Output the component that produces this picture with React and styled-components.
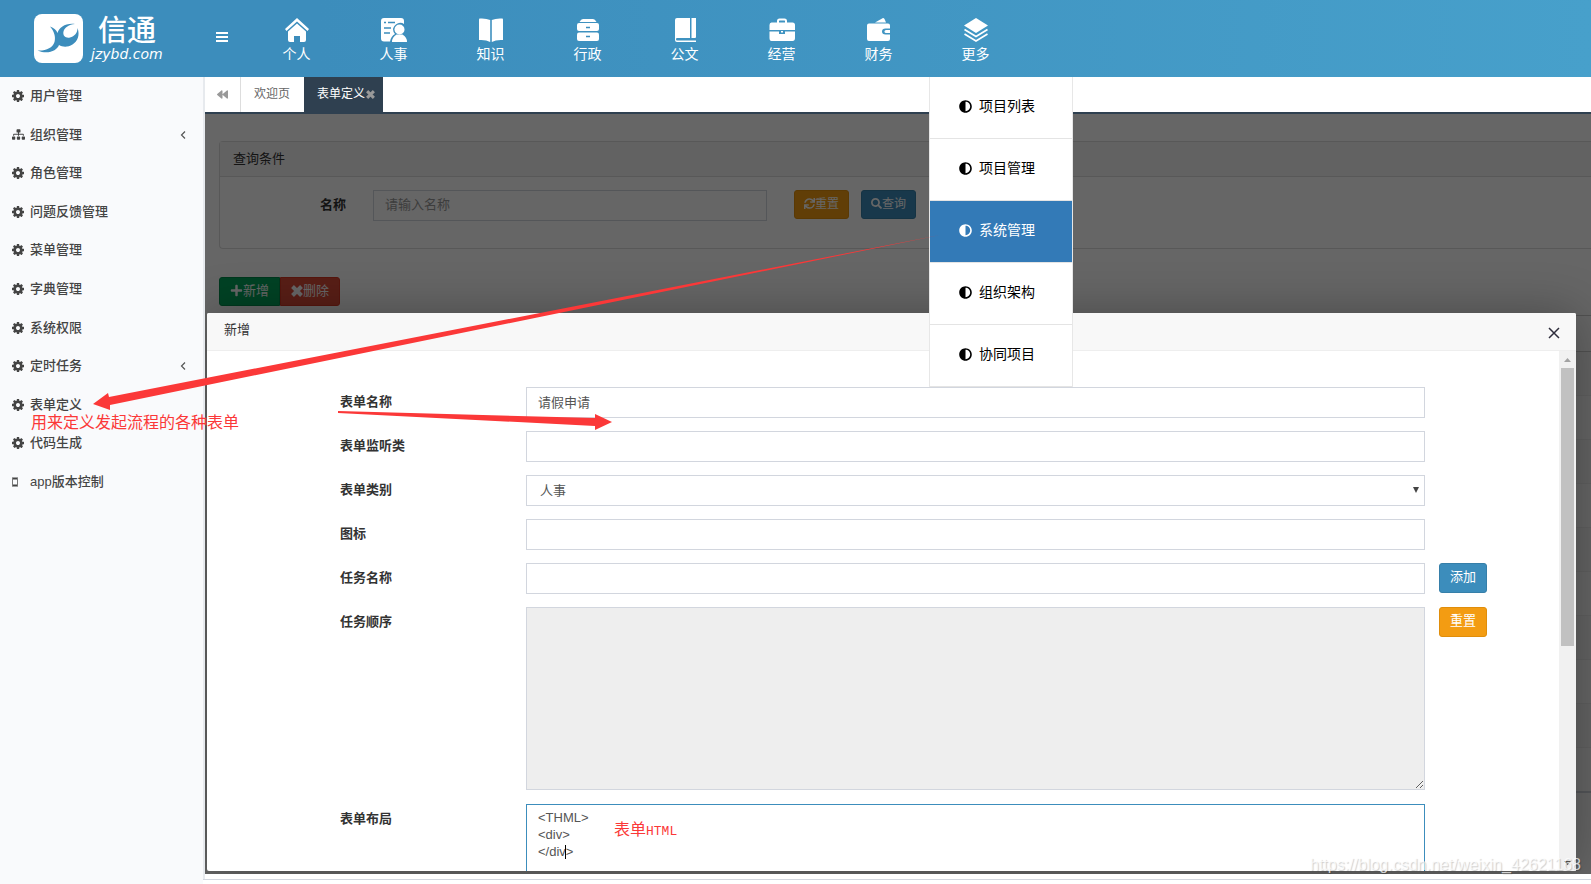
import React from "react";
import styled, { createGlobalStyle, css } from "styled-components";
import {
  FaAdjust,
  FaBackward,
  FaPlus,
  FaSearch,
  FaSitemap,
  FaSync,
} from "react-icons/fa";

const GlobalStyle = createGlobalStyle`
  *, *::before, *::after { box-sizing: border-box; }
  body {
    margin: 0;
    background: #fff;
    color: #333;
    font: 13px/18px "Liberation Sans", "Noto Sans CJK SC", sans-serif;
  }
  button, input, select, textarea { font: inherit; margin: 0; }
  svg { display: block; flex: none; }
`;

const Page = styled.div`
  position: relative;
  display: flex;
  flex-direction: column;
  height: 100vh;
  overflow: hidden;
`;

/* ---------- top bar ---------- */

const Header = styled.header`
  position: relative;
  z-index: 5;
  display: flex;
  flex: none;
  height: 77px;
  background: linear-gradient(90deg, #3c8dbc 20%, #47a0cb 100%);
  color: #fff;
`;

const Brand = styled.a`
  display: flex;
  align-items: center;
  gap: 8px;
  width: 204px;
  padding-left: 34px;
  color: #fff;
  text-decoration: none;
`;

const BrandText = styled.span`
  display: flex;
  flex-direction: column;
`;

const BrandName = styled.span`
  padding-left: 7px;
  font-size: 29px;
  line-height: 30px;
  font-weight: 500;
`;

const BrandSite = styled.span`
  font: italic 14px/16px "DejaVu Sans", sans-serif;
`;

const IconButton = styled.button`
  display: flex;
  align-items: center;
  justify-content: center;
  padding: 0 0 ${(p) => p.$lift || 0}px;
  border: 0;
  background: none;
  color: ${(p) => p.$color || "inherit"};
  width: ${(p) => p.$width || 35}px;
`;

const TopNav = styled.nav`
  display: flex;
  padding-left: 9px;
`;

const NavItem = styled.div`
  position: relative;
  width: 97px;
`;

const NavLink = styled.a`
  display: flex;
  flex-direction: column;
  align-items: center;
  gap: 2px;
  padding-top: 18px;
  color: #fff;
  font-size: 14px;
  line-height: 20px;
  text-decoration: none;
`;

const Menu = styled.div`
  position: absolute;
  top: 77px;
  left: 2px;
  width: 144px;
  border: 1px solid #e7e7e7;
  border-width: 0 1px;
  background: #fff;
`;

const MenuLink = styled.a`
  display: flex;
  align-items: center;
  gap: 7px;
  height: 62px;
  padding: 0 0 3px 29px;
  border-bottom: 1px solid #e4e4e4;
  background: ${(p) => (p.$active ? "#337ab7" : "#fff")};
  color: ${(p) => (p.$active ? "#fff" : "#000")};
  font-size: 14px;
  text-decoration: none;
`;

/* ---------- side bar ---------- */

const Body = styled.div`
  display: flex;
  flex: 1;
  min-height: 0;
`;

const Sidebar = styled.nav`
  flex: none;
  width: 203px;
  background: #f9fafc;
`;

const SideList = styled.ul`
  display: grid;
  grid-template-rows: repeat(11, 1fr);
  height: 424px;
  margin: 0;
  padding: 0;
  list-style: none;
`;

const SideLink = styled.a`
  display: flex;
  align-items: center;
  height: 100%;
  padding: 0 17px 0 12px;
  color: #444;
  font-weight: 500;
  text-decoration: none;
`;

const SideIcon = styled.span`
  display: flex;
  width: 18px;
`;

const SideText = styled.span`
  flex: 1;
`;

/* ---------- work area ---------- */

const Main = styled.main`
  display: flex;
  flex: 1;
  flex-direction: column;
  min-width: 0;
`;

const Work = styled.div`
  display: flex;
  flex: 1;
  flex-direction: column;
  min-height: 0;
  padding-bottom: 5px;
  border-left: 2px solid #e7eaee;
`;

const Footer = styled.footer`
  flex: none;
  height: 5px;
  border-top: 1px solid #d2d6de;
`;

const Tabs = styled.div`
  display: flex;
  flex: none;
  height: 37px;
  border-bottom: 2px solid #2f4050;
  font-size: 12px;
`;

const TabScroll = styled(IconButton)`
  width: 36px;
  border-right: 1px solid #ddd;
`;

const Tab = styled.a`
  display: flex;
  align-items: center;
  gap: 1px;
  padding: 0 ${(p) => (p.$active ? 8 : 14)}px 1px 13px;
  background: ${(p) => (p.$active ? "#2f4050" : "#fff")};
  color: ${(p) => (p.$active ? "#fff" : "#666")};
  text-decoration: none;
`;

const Stage = styled.section`
  position: relative;
  flex: 1;
  min-height: 0;
  overflow: hidden;
  padding: 27px 0 0 14px;
`;

const Panel = styled.div`
  margin-bottom: 28px;
  border: 1px solid #ddd;
  border-right: 0;
  border-radius: 4px 0 0 4px;
`;

const PanelTitle = styled.div`
  height: 35px;
  padding: 8px 13px;
  border-bottom: 1px solid #ddd;
  background: #f5f5f5;
`;

const SearchForm = styled.form`
  display: flex;
  gap: 27px;
  height: 71px;
  padding-top: 13px;
`;

const Label = styled.label`
  padding-top: 6px;
  color: #333;
  font-weight: 700;
  ${(p) =>
    p.$right &&
    css`
      width: 126px;
      text-align: right;
    `}
`;

const control = css`
  width: 100%;
  padding: 6px 11px;
  border: 1px solid #d2d6de;
  border-radius: 0;
  background: #fff;
  color: #555;
  outline: 0;
`;

const Input = styled.input`
  ${control}
  height: 31px;
  padding-top: 5px;
  padding-bottom: 7px;
  &::placeholder { color: #999; opacity: 1; }
`;

const SearchInput = styled(Input)`
  width: 394px;
`;

const ButtonRow = styled.div`
  display: flex;
  align-items: flex-start;
  gap: ${(p) => p.$gap || 0}px;
`;

const tones = {
  primary: ["#3c8dbc", "#367fa9"],
  warning: ["#f39c12", "#e08e0b"],
  success: ["#00a65a", "#008d4c"],
  danger: ["#dd4b39", "#d73925"],
};

const Button = styled.button`
  display: flex;
  align-items: center;
  height: ${(p) => (p.$small ? 29 : 30)}px;
  padding: 0 ${(p) => p.$pad || 10}px 2px;
  border: 1px solid ${(p) => tones[p.$tone][1]};
  border-radius: ${(p) => p.$radius || "3px"};
  background: ${(p) => tones[p.$tone][0]};
  color: #fff;
  font-size: ${(p) => (p.$size || 13)}px;
`;

const Grid = styled.table`
  width: 100%;
  margin-top: 9px;
  border-collapse: collapse;
  border-top: 1px solid #ccc;
  border-bottom: 2px solid #d2d6de;
  th { height: 36px; padding: 0; border-bottom: 1px solid #ccc; }
  td { height: 44px; padding: 0; border-bottom: 1px solid #f0f0f0; }
  tbody tr:nth-child(odd) { background: #f9f9f9; }
`;

const Shade = styled.div`
  position: absolute;
  inset: 0;
  background: rgba(0, 0, 0, 0.6);
`;

/* ---------- dialog ---------- */

const Dialog = styled.div`
  position: absolute;
  inset: 199px 15px 3px 2px;
  display: flex;
  flex-direction: column;
  border-radius: 2px;
  background: #fff;
  box-shadow: 1px 1px 50px rgba(0, 0, 0, 0.3);
`;

const DialogHead = styled.div`
  display: flex;
  flex: none;
  align-items: center;
  justify-content: space-between;
  height: 38px;
  padding: 0 15px 3px 17px;
  border-bottom: 1px solid #eee;
  border-radius: 2px 2px 0 0;
  background: #f8f8f8;
`;

const CloseButton = styled(IconButton)`
  width: 14px;
  padding-top: 5px;
`;

const DialogBody = styled.div`
  display: flex;
  flex: 1;
  min-height: 0;
`;

const Form = styled.form`
  display: grid;
  flex: 1;
  grid-template-columns: 172px 1fr 120px;
  align-content: start;
  align-items: start;
  gap: 13px 14px;
  min-width: 0;
  overflow: hidden;
  padding: 36px 0 0 133px;
`;

const Field = styled.div`
  position: relative;
  display: flex;
`;

const Select = styled.select`
  ${control}
  height: 31px;
  padding: 0 13px;
  appearance: none;
`;

const SelectArrow = styled.svg`
  position: absolute;
  top: 12px;
  right: 6px;
  pointer-events: none;
`;

const TextArea = styled.textarea`
  ${control}
  height: ${(p) => p.$height}px;
  padding: 4px 11px;
  line-height: 17px;
  ${(p) =>
    p.$disabled &&
    css`
      background: #eee;
      margin-bottom: 1px;
    `}
  ${(p) =>
    p.$focused &&
    css`
      border-color: #3c8dbc;
    `}
`;

const Caret = styled.span`
  position: absolute;
  top: 41px;
  left: 39px;
  width: 1px;
  height: 14px;
  background: #000;
`;

const ScrollTrack = styled.div`
  display: flex;
  flex: none;
  flex-direction: column;
  align-items: center;
  justify-content: space-between;
  width: 17px;
  padding: 7px 0 6px;
  background: #f1f1f1;
`;

const ScrollRail = styled.div`
  flex: 1;
  width: 13px;
  margin: 6px 0;
`;

const ScrollThumb = styled.div`
  height: 57%;
  background: #c1c1c1;
`;

/* ---------- annotations ---------- */

const Arrows = styled.svg`
  position: absolute;
  z-index: 6;
  top: 0;
  left: 0;
  pointer-events: none;
`;

const Note = styled.span`
  position: absolute;
  z-index: 6;
  top: ${(p) => p.$top}px;
  left: ${(p) => p.$left}px;
  color: #fb3838;
  font: 400 16px/20px "Noto Sans CJK SC", sans-serif;
  white-space: nowrap;
`;

const NoteLatin = styled.span`
  font: 13px/20px "Liberation Mono", monospace;
`;

const Watermark = styled.span`
  position: absolute;
  z-index: 7;
  right: 10px;
  bottom: 10px;
  color: rgba(255, 255, 255, 0.75);
  font-size: 16px;
  text-shadow: 1px 1px 1px rgba(0, 0, 0, 0.2);
`;

/* ---------- drawings ---------- */

const Logo = () => (
  <svg width="49" height="49" viewBox="0 0 49 49">
    <rect width="49" height="49" rx="8" fill="#fff" />
    <path
      d="M16 12.500C20 14 22.500 16 23.500 19 25.500 13.500 31 9 41 10c-6 .5-10.500 3.500-11.500 7.500C28.500 22 32 24.500 36 23.500c4.500-1 7.500-4.500 7.500-9.500 2.500 7 .5 13-5 16.500-5 3-10 2.500-13.500.5C23 36.500 14 41 3.500 36.500 12 37 18.500 34 20.500 28c1.500-5-.5-11-4.500-15.500z"
      fill="#3c8dbc"
    />
  </svg>
);

const Bars = () => (
  <svg width="12" height="10" viewBox="0 0 12 10" fill="#fff">
    <path d="M0 0h12v2H0zM0 4h12v2H0zM0 8h12v2H0z" />
  </svg>
);

const Cog = () => (
  <svg width="12" height="12" viewBox="0 -128 1536 1536" fill="currentColor">
    <path d="M1024 640q0-106-75-181t-181-75-181 75-75 181 75 181 181 75 181-75 75-181zm512-109v222q0 12-8 23t-20 13l-185 28q-19 54-39 91 35 50 107 138 10 12 10 25t-9 23q-27 37-99 108t-94 71q-12 0-26-9l-138-108q-44 23-91 38-16 136-29 186-7 28-36 28h-222q-14 0-24.500-8.500t-11.500-21.500l-28-184q-49-16-90-37l-141 107q-10 9-25 9-14 0-25-11-126-114-165-168-7-10-7-23 0-12 8-23 15-21 51-66.500t54-70.500q-27-50-41-99l-183-27q-13-2-21-12.500t-8-23.500v-222q0-12 8-23t19-13l186-28q14-46 39-92-40-57-107-138-10-12-10-24 0-10 9-23 26-36 98.500-107.500t94.500-71.500q13 0 26 10l138 107q44-23 91-38 16-136 29-186 7-28 36-28h222q14 0 24.500 8.500t11.500 21.500l28 184q49 16 90 37l142-107q9-9 24-9 13 0 25 10 129 119 165 170 7 8 7 22 0 12-8 23-15 21-51 66.500t-54 70.500q26 50 41 98l183 28q13 2 21 12.500t8 23.500z" />
  </svg>
);

const Cross = ({ size, color = "currentColor" }) => (
  <svg width={size} height={size} viewBox="0 0 12 12" stroke={color} strokeWidth="4">
    <path d="M1.500 1.500l9 9M10.500 1.500l-9 9" />
  </svg>
);

const Chevron = () => (
  <svg width="6" height="8" viewBox="0 0 6 8" fill="none" stroke="#555">
    <path d="M5 .5 1.500 4 5 7.500" strokeWidth="1.200" />
  </svg>
);

const Phone = () => (
  <svg width="6" height="10" viewBox="0 0 6 10">
    <path d="M.5 1.500h5M.5 8.500h5" stroke="#444" strokeWidth="2" />
    <path d="M.5.500v9M5.500.500v9" stroke="#777" />
  </svg>
);

const NavSvg = ({ children }) => (
  <svg width="26" height="24" viewBox="0 0 26 24" fill="#fff">
    {children}
  </svg>
);

const navIcons = {
  home: (
    <NavSvg>
      <path d="M13 0 25 11l-1.500 2L13 3.500 2.500 13 1 11z" />
      <path d="M13 5.500 22 13.500V22q0 2-2 2h-4v-6h-6v6H6q-2 0-2-2v-8.500z" />
    </NavSvg>
  ),
  people: (
    <NavSvg>
      <path d="M3 0h17q3 0 3 3v3q-3-2-6.500-.5T12 11q0 3 2 5-4 2-5 7.500H3q-3 0-3-3V3q0-3 3-3z" />
      <path d="M3 4.500h2M7 4.500h7M3 10h7M3 15h6" stroke="#3c8dbc" strokeWidth="1.500" />
      <circle cx="18.500" cy="11.500" r="5" />
      <path d="M11 24q0-5 4.500-7.500h6Q26 19 26 24z" />
    </NavSvg>
  ),
  book: (
    <NavSvg>
      <path d="M1.500.500Q8 0 12.200 2v22Q8 21.500 1 22V2q0-1.500.5-1.500zM24.500.500Q18 0 13.800 2v22Q18 21.500 25 22V2q0-1.500-.5-1.500z" />
    </NavSvg>
  ),
  drawers: (
    <NavSvg>
      <path d="M8 1h10q2 0 3.500 3h-17Q6 1 8 1z" />
      <rect x="2" y="5" width="22" height="8" rx="2" />
      <rect x="2" y="14.500" width="22" height="8.500" rx="2" />
      <path d="M11 9.500h4M11 18.500h4" stroke="#3c8dbc" strokeWidth="1.500" />
    </NavSvg>
  ),
  notebook: (
    <NavSvg>
      <path d="M3 2q0-2 2-2h13v20H5q-1 0-1 1.200T5 22.500h19V24H5q-2 0-2-2zM19.500 0H24v19q0 1-1 1h-3.500z" />
    </NavSvg>
  ),
  briefcase: (
    <NavSvg>
      <path d="M9 5V3q0-1.500 1.500-1.500h5Q17 1.500 17 3v2" fill="none" stroke="#fff" strokeWidth="2" />
      <path d="M2.500 4.500h21Q26 4.500 26 7v5H.5V7q0-2.500 2-2.500zM.5 13.500H10V16h6v-2.500h10V20q0 3-2.500 3h-21Q.5 23 .5 20z" />
      <path d="M12 13h2v1.500h-2z" />
    </NavSvg>
  ),
  wallet: (
    <NavSvg>
      <path d="M9 4.500 17 0q1 0 1.500 1l1.500 3.500z" />
      <path d="M3 5.500h19q2 0 2 2v3h-4.500q-3.500 0-3.500 3t3.500 3H24V21q0 2-2 2H3q-2 0-2-2V7.500q0-2 2-2z" />
      <path d="M20 12h4v3h-4q-1.500 0-1.500-1.500T20 12z" />
    </NavSvg>
  ),
  layers: (
    <NavSvg>
      <path d="M13 0 25 7.500 13 15 1 7.500z" />
      <path d="M1.500 11.500 13 18.500l11.500-7M1.500 16 13 23l11.500-7" fill="none" stroke="#fff" strokeWidth="1.700" />
    </NavSvg>
  ),
};

const navItems = [
  ["个人", "home"],
  ["人事", "people"],
  ["知识", "book"],
  ["行政", "drawers"],
  ["公文", "notebook"],
  ["经营", "briefcase"],
  ["财务", "wallet"],
  ["更多", "layers"],
];

const moreItems = ["项目列表", "项目管理", "系统管理", "组织架构", "协同项目"];

const sideItems = [
  { text: "用户管理" },
  { text: "组织管理", icon: <FaSitemap size={13} />, sub: true },
  { text: "角色管理" },
  { text: "问题反馈管理" },
  { text: "菜单管理" },
  { text: "字典管理" },
  { text: "系统权限" },
  { text: "定时任务", sub: true },
  { text: "表单定义" },
  { text: "代码生成" },
  { text: "app版本控制", icon: <Phone /> },
];

const gridRows = Array.from({ length: 10 }, (_, i) => i);

function TopBar() {
  return (
    <Header>
      <Brand href="#">
        <Logo />
        <BrandText>
          <BrandName>信通</BrandName>
          <BrandSite>jzybd.com</BrandSite>
        </BrandText>
      </Brand>
      <IconButton type="button" aria-label="菜单" $lift={3}>
        <Bars />
      </IconButton>
      <TopNav>
        {navItems.map(([text, icon]) => (
          <NavItem key={text}>
            <NavLink href="#">
              {navIcons[icon]}
              {text}
            </NavLink>
            {text === "更多" && (
              <Menu>
                {moreItems.map((item) => (
                  <MenuLink key={item} href="#" $active={item === "系统管理"}>
                    <FaAdjust size={13} />
                    {item}
                  </MenuLink>
                ))}
              </Menu>
            )}
          </NavItem>
        ))}
      </TopNav>
    </Header>
  );
}

function SideBar() {
  return (
    <Sidebar>
      <SideList>
        {sideItems.map(({ text, icon, sub }) => (
          <li key={text}>
            <SideLink href="#">
              <SideIcon>{icon || <Cog />}</SideIcon>
              <SideText>{text}</SideText>
              {sub && <Chevron />}
            </SideLink>
          </li>
        ))}
      </SideList>
    </Sidebar>
  );
}

function ListPage() {
  return (
    <>
      <Panel>
        <PanelTitle>查询条件</PanelTitle>
        <SearchForm>
          <Label $right htmlFor="q-name">名称</Label>
          <SearchInput id="q-name" placeholder="请输入名称" />
          <ButtonRow $gap={12}>
            <Button type="button" $small $tone="warning" $pad={9} $size={12}>
              <FaSync size={11} />重置
            </Button>
            <Button type="button" $small $tone="primary" $pad={9} $size={12}>
              <FaSearch size={11} />查询
            </Button>
          </ButtonRow>
        </SearchForm>
      </Panel>
      <ButtonRow>
        <Button type="button" $small $tone="success" $radius="3px 0 0 3px">
          <FaPlus size={13} />新增
        </Button>
        <Button type="button" $small $tone="danger" $radius="0 3px 3px 0">
          <Cross size={12} />删除
        </Button>
      </ButtonRow>
      <Grid>
        <thead>
          <tr><th /></tr>
        </thead>
        <tbody>
          {gridRows.map((row) => (
            <tr key={row}><td /></tr>
          ))}
        </tbody>
      </Grid>
    </>
  );
}

function FormDialog() {
  return (
    <Dialog role="dialog" aria-label="新增">
      <DialogHead>
        新增
        <CloseButton type="button" aria-label="关闭">
          <svg width="12" height="12" viewBox="0 0 12 12" stroke="#2e2d3c" strokeWidth="1.500">
            <path d="M1 1l10 10M11 1 1 11" />
          </svg>
        </CloseButton>
      </DialogHead>
      <DialogBody>
        <Form>
          <Label htmlFor="f-name">表单名称</Label>
          <Input id="f-name" defaultValue="请假申请" />
          <span />
          <Label htmlFor="f-listener">表单监听类</Label>
          <Input id="f-listener" />
          <span />
          <Label htmlFor="f-type">表单类别</Label>
          <Field>
            <Select id="f-type" defaultValue="人事">
              <option>人事</option>
            </Select>
            <SelectArrow width="6" height="6" viewBox="0 0 6 6">
              <path d="M0 0h6L3 6z" fill="#444" />
            </SelectArrow>
          </Field>
          <span />
          <Label htmlFor="f-icon">图标</Label>
          <Input id="f-icon" />
          <span />
          <Label htmlFor="f-task">任务名称</Label>
          <Input id="f-task" />
          <ButtonRow>
            <Button type="button" $tone="primary">添加</Button>
          </ButtonRow>
          <Label htmlFor="f-order">任务顺序</Label>
          <Field>
            <TextArea id="f-order" readOnly $disabled $height={183} />
          </Field>
          <ButtonRow>
            <Button type="button" $tone="warning">重置</Button>
          </ButtonRow>
          <Label htmlFor="f-layout">表单布局</Label>
          <Field>
            <TextArea
              id="f-layout"
              $focused
              $height={183}
              defaultValue={"<THML>\n<div>\n</div>"}
            />
            <Caret />
          </Field>
        </Form>
        <ScrollTrack>
          <svg width="7" height="4" viewBox="0 0 7 4">
            <path d="M0 4 3.500 0 7 4z" fill="#a3a3a3" />
          </svg>
          <ScrollRail>
            <ScrollThumb />
          </ScrollRail>
          <svg width="7" height="4" viewBox="0 0 7 4">
            <path d="M0 0h7L3.500 4z" fill="#505050" />
          </svg>
        </ScrollTrack>
      </DialogBody>
    </Dialog>
  );
}

export default function App() {
  return (
    <Page>
      <GlobalStyle />
      <TopBar />
      <Body>
        <SideBar />
        <Main>
          <Work>
            <Tabs>
              <TabScroll type="button" aria-label="向左" $color="#999">
                <FaBackward size={11} />
              </TabScroll>
              <Tab href="#">欢迎页</Tab>
              <Tab href="#" $active>
                表单定义
                <Cross size={9} color="#999" />
              </Tab>
            </Tabs>
            <Stage>
              <ListPage />
              <Shade />
              <FormDialog />
            </Stage>
          </Work>
          <Footer />
        </Main>
      </Body>
      <Arrows width="960" height="440" viewBox="0 0 960 440" fill="#fb3838">
        <path d="M93 404 108 393 109 397 940 235 110 405 110 410z" />
        <path d="M338 411V413L595 426V430L612 422 595 414V418z" />
      </Arrows>
      <Note $top={411} $left={31}>用来定义发起流程的各种表单</Note>
      <Note $top={818} $left={614}>
        表单<NoteLatin>HTML</NoteLatin>
      </Note>
      <Watermark>https://blog.csdn.net/weixin_42621168</Watermark>
    </Page>
  );
}
